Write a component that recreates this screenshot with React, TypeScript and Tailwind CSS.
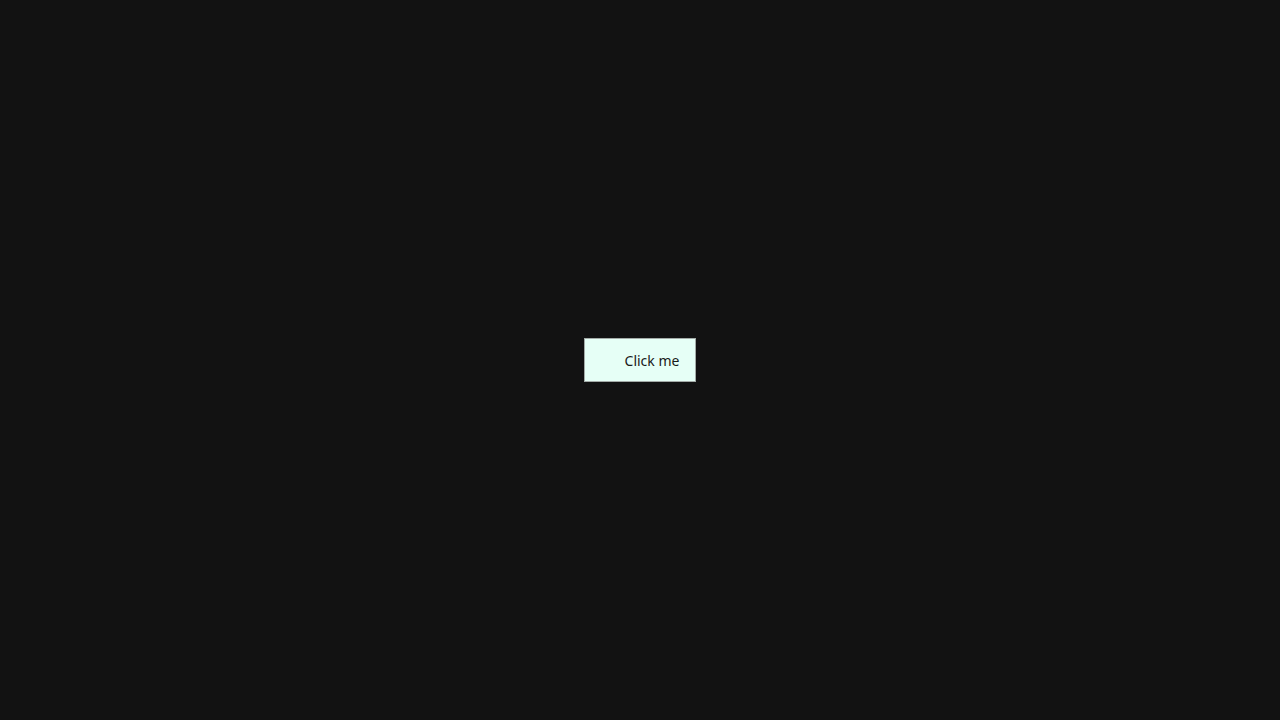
import React from "react";

export default function App() {
  return (
    <div className="w-full h-screen bg-[#121212] flex items-center justify-center font-['Noto_Sans',sans-serif]">
      <button className="h-[44px] border border-[#a3aba8] bg-[#e6fff6] text-[#1a1a1a] text-[14px] pl-[40px] pr-[16px] flex items-center whitespace-nowrap">
        Click me
      </button>
    </div>
  );
}
